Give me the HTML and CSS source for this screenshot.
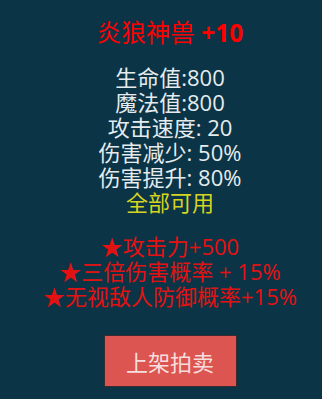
FILE: index.html
```html
<!DOCTYPE html>
<html lang="zh">
<head>
    <meta charset="UTF-8">
    <meta name="viewport" content="width=device-width, initial-scale=1.0">
    <title>炎狼神兽</title>
    <link rel="stylesheet" href="styles.css">
</head>
<body>
    <div class="item-panel">
        <h1 class="item-name">炎狼神兽 <b>+10</b></h1>

        <div class="stats">
            <div>生命值:800</div>
            <div>魔法值:800</div>
            <div>攻击速度: 20</div>
            <div>伤害减少: 50%</div>
            <div>伤害提升: 80%</div>
            <div class="usable">全部可用</div>
        </div>

        <div class="bonus">
            <div>★攻击力+500</div>
            <div>★三倍伤害概率 + 15%</div>
            <div>★无视敌人防御概率+15%</div>
        </div>

        <button class="sell-button">上架拍卖</button>
    </div>
</body>
</html>
```

FILE: styles.css
```css
body {
    margin: 0;
    height: 100vh;
    background: #0b3447;
    font-family: "Open Sans", "Noto Sans CJK SC", sans-serif;
    color: #e6ecee;
}

/* content sits a bit right of the window centre */
.item-panel {
    display: flex;
    flex-direction: column;
    align-items: center;
    padding: 18px 0 0 18px;
    text-align: center;
}

.item-name {
    margin: 0;
    font-size: 24.5px;
    font-weight: normal;
    line-height: 30px;
    color: #ff0000;
}

.item-name b {
    font-weight: bold;
}

.stats {
    margin-top: 17px;
    font-size: 22px;
    line-height: 25px;
}

.usable {
    color: #d6d41e;
}

.bonus {
    margin-top: 19px;
    font-size: 22px;
    line-height: 25px;
    color: #e31212;
}

.sell-button {
    margin-top: 26px;
    width: 133px;
    height: 52px;
    padding: 0;
    border: 1px solid #3b2a2e;
    background: #dd5550;
    color: #f6dede;
    font-family: "Open Sans", "Noto Sans CJK SC", sans-serif;
    font-size: 22px;
    cursor: pointer;
}
```
